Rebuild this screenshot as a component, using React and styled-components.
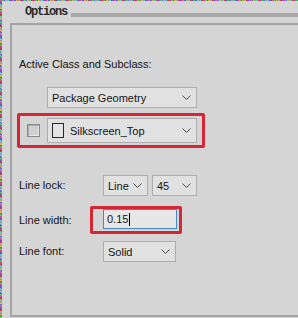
import React from "react";
import styled, { createGlobalStyle } from "styled-components";

const Global = createGlobalStyle`
  html, body { margin: 0; padding: 0; background: #d5d5d5; }
  body { font-family: "Liberation Sans", Arial, sans-serif; }
`;

const Page = styled.div`
  box-sizing: border-box;
  width: 298px;
  height: 318px;
  overflow: hidden;
  background: #d5d5d5;
  border-style: solid;
  border-width: 1px 0 0 2px;
  border-image: repeating-linear-gradient(
      45deg,
      #d04a9a 0 1px,
      #5fc35a 1px 2px,
      #4a6fd8 2px 3px,
      #e0b040 3px 4px,
      #9a9a9a 4px 5px,
      #5ad0d0 5px 6px,
      #c04040 6px 7px,
      #8050c0 7px 8px
    )
    1;
`;

const Header = styled.div`
  display: flex;
  align-items: flex-start;
  height: 22px;
`;

const Title = styled.div`
  margin: 4px 0 0 23px;
  font-family: "Liberation Mono", "Courier New", monospace;
  font-weight: bold;
  font-size: 12px;
  line-height: 14px;
  letter-spacing: -1.2px;
  color: #2a2a2a;
`;

const TitleBar = styled.div`
  flex: 1;
  height: 4px;
  margin: 12px 0 0 4px;
  background: #a9a9a9;
`;

const Panel = styled.div`
  box-sizing: border-box;
  margin-left: 8px;
  height: 294px;
  border-style: solid;
  border-color: #a4a4a4;
  border-width: 2px 0 2px 2px;
  padding-left: 5px;
  display: flex;
  flex-direction: column;
  align-items: flex-start;
`;

const Label = styled.div`
  font-size: 11px;
  line-height: 13px;
  color: #141414;
  padding-left: 2px;
  margin-top: ${(p) => p.$top || 0}px;
  width: ${(p) => (p.$w ? `${p.$w}px` : "auto")};
  box-sizing: border-box;
  flex-shrink: 0;
`;

const Select = styled.div`
  box-sizing: border-box;
  display: flex;
  align-items: center;
  width: ${(p) => p.$w}px;
  height: ${(p) => p.$h || 21}px;
  margin-top: ${(p) => p.$top || 0}px;
  margin-left: ${(p) => p.$left || 0}px;
  padding: 0 5px 0 4px;
  background: #e1e1e1;
  border: 1px solid #adadad;
  font-size: 11px;
  color: #141414;
  flex-shrink: 0;
`;

const SelectText = styled.span`
  flex: 1;
  white-space: nowrap;
`;

const Swatch = styled.span`
  box-sizing: border-box;
  width: 12px;
  height: 15px;
  margin-right: 6px;
  border: 1.5px solid #2a2a2a;
  background: #e4e4e4;
  flex-shrink: 0;
`;

const Highlight = styled.div`
  box-sizing: border-box;
  display: flex;
  align-items: ${(p) => p.$align || "center"};
  width: ${(p) => p.$w}px;
  height: ${(p) => p.$h}px;
  margin-top: ${(p) => p.$top || 0}px;
  margin-left: ${(p) => p.$left || 0}px;
  padding-left: ${(p) => p.$pad || 0}px;
  border: 3px solid #d42634;
  border-radius: 2px;
  flex-shrink: 0;
`;

const CheckBox = styled.span`
  box-sizing: border-box;
  width: 13px;
  height: 13px;
  margin-right: 7px;
  background: #d0d0d0;
  border: 1px solid #8a8a8a;
  box-shadow: inset 1px 1px 0 #a8a8a8, inset -1px -1px 0 #e6e6e6;
  flex-shrink: 0;
`;

const Row = styled.div`
  display: flex;
  align-items: center;
  margin-top: ${(p) => p.$top || 0}px;
  gap: ${(p) => p.$gap || 0}px;
`;

const Controls = styled.div`
  display: flex;
  gap: 4px;
`;

const TextInput = styled.div`
  box-sizing: border-box;
  display: flex;
  align-items: center;
  width: 74px;
  height: 20px;
  padding-left: 3px;
  background: #e7e7e7;
  border: 1px solid #4a88c2;
  font-size: 11px;
  color: #141414;
`;

const Caret = styled.span`
  display: inline-block;
  width: 1px;
  height: 13px;
  margin-left: 1px;
  background: #000;
`;

const Chevron = () => (
  <svg width="9" height="5" viewBox="0 0 9 5" aria-hidden="true">
    <polyline
      points="0.5,0.5 4.5,4.5 8.5,0.5"
      fill="none"
      stroke="#4a4a4a"
      strokeWidth="1"
    />
  </svg>
);

export default function App() {
  return (
    <>
      <Global />
      <Page>
        <Header>
          <Title>Options</Title>
          <TitleBar />
        </Header>
        <Panel>
          <Label $top={33}>Active Class and Subclass:</Label>
          <Select $w={150} $top={16} $left={30}>
            <SelectText>Package Geometry</SelectText>
            <Chevron />
          </Select>
          <Highlight $w={188} $h={35} $top={5} $pad={7}>
            <CheckBox />
            <Select $w={150} $h={25}>
              <Swatch />
              <SelectText>Silkscreen_Top</SelectText>
              <Chevron />
            </Select>
          </Highlight>

          <Row $top={27}>
            <Label $w={86}>Line lock:</Label>
            <Controls>
              <Select $w={45}>
                <SelectText>Line</SelectText>
                <Chevron />
              </Select>
              <Select $w={45}>
                <SelectText>45</SelectText>
                <Chevron />
              </Select>
            </Controls>
          </Row>

          <Row $top={10}>
            <Label $w={86}>Line width:</Label>
            <Highlight $w={92} $h={28} $left={-13} $pad={10} $align="flex-start">
              <TextInput>
                0.15
                <Caret />
              </TextInput>
            </Highlight>
          </Row>

          <Row $top={7}>
            <Label $w={86}>Line font:</Label>
            <Select $w={73}>
              <SelectText>Solid</SelectText>
              <Chevron />
            </Select>
          </Row>
        </Panel>
      </Page>
    </>
  );
}
